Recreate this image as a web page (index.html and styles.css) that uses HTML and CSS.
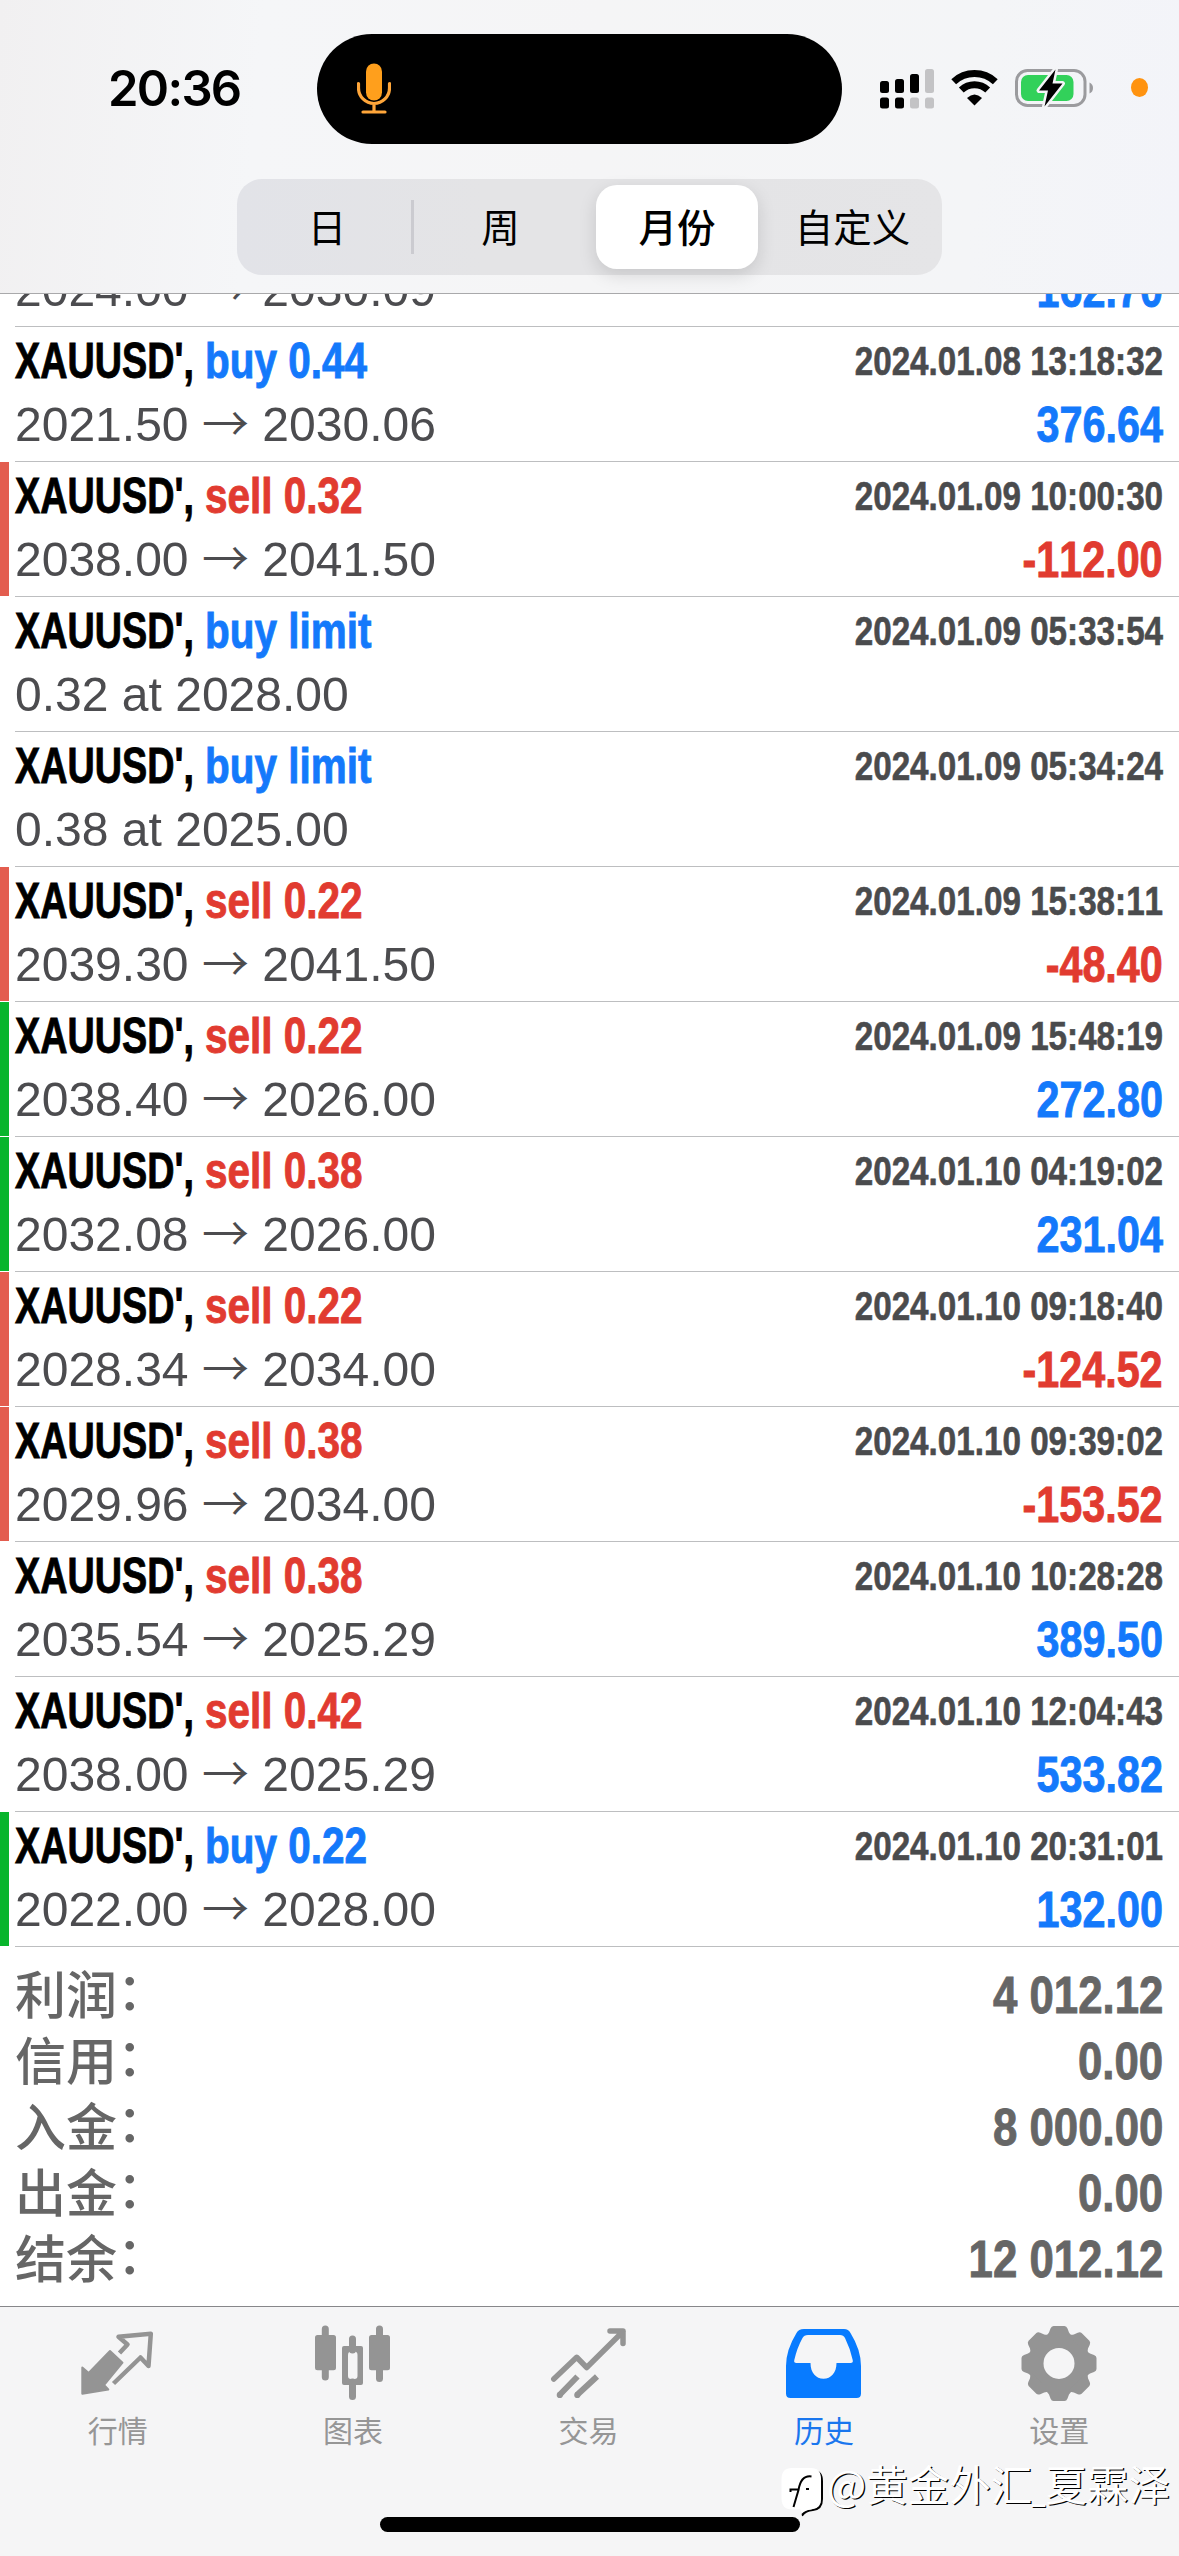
FILE: index.html
```
<!DOCTYPE html>
<html lang="zh-CN">
<head>
<meta charset="utf-8">
<title>历史</title>
<link rel="stylesheet" href="styles.css">
</head>
<body>
<div class="screen">
  <header class="header">
    <div class="status">
      <span class="clock">20:36</span>
      <div class="island">
        <svg class="mic" width="34" height="52" viewBox="0 0 34 52">
          <rect x="9" y="0.5" width="16" height="37" rx="8" fill="#ff9f1c"/>
          <path d="M1.5 20.500V25a15.500 15.500 0 0 0 31 0V20.500M17 40.500V48M6 49H28" fill="none" stroke="#ffa63a" stroke-width="3.200" stroke-linecap="round"/>
        </svg>
      </div>
      <svg class="signal" width="54" height="40" viewBox="0 0 54 40">
        <g fill="#000"><rect x="0" y="12" width="9" height="12" rx="2.500"/><rect x="15" y="10" width="9" height="14" rx="2.500"/><rect x="30" y="5" width="9" height="19" rx="2.500"/><rect x="0" y="28.500" width="9" height="11" rx="2.500"/><rect x="15" y="28.500" width="9" height="11" rx="2.500"/></g>
        <g fill="#c3c3c5"><rect x="45" y="0" width="9" height="24" rx="2.500"/><rect x="30" y="28.500" width="9" height="11" rx="2.500"/><rect x="45" y="28.500" width="9" height="11" rx="2.500"/></g>
      </svg>
      <svg class="wifi" width="47" height="36" viewBox="0 0 47 36">
        <path d="M2.700 11.800A30.500 30.500 0 0 1 44.300 11.800M10.300 20A19.300 19.300 0 0 1 36.700 20" fill="none" stroke="#000" stroke-width="7"/>
        <path d="M23.500 35.500L16 28Q23.500 21 31 28Z"/>
      </svg>
      <svg class="battery" width="78" height="38" viewBox="0 0 78 38">
        <rect x="1.500" y="1.500" width="68.500" height="35" rx="11" fill="none" stroke="#9b9b9e" stroke-width="3"/>
        <path d="M74.500 13.500Q78 15 78 19T74.500 24.500Z" fill="#9b9b9e"/>
        <rect x="6" y="6" width="52.500" height="26" rx="7" fill="#32d15a"/>
        <path d="M40.500 0.500L24 21.500H33L29.500 37.500L47.500 14.500H37.500Z" stroke="#f4f5f7" stroke-width="5" paint-order="stroke" stroke-linejoin="round"/>
      </svg>
      <span class="rec-dot"></span>
    </div>
    <nav class="segments">
      <span class="segment divided">日</span>
      <span class="segment">周</span>
      <span class="segment selected">月份</span>
      <span class="segment">自定义</span>
    </nav>
  </header>

  <main class="content">
    <ul class="deals">
      <li class="deal cut"><i class="mark"></i><div class="body"><div class="line"></div><div class="line"><span class="detail">2024.00 <b class="arrow">→</b> 2030.09</span><span class="amount blue">162.70</span></div></div></li>
      <li class="deal"><i class="mark"></i><div class="body"><div class="line"><span class="name">XAUUSD',</span><span class="action blue">buy 0.44</span><time class="date">2024.01.08 13:18:32</time></div><div class="line"><span class="detail">2021.50 <b class="arrow">→</b> 2030.06</span><span class="amount blue">376.64</span></div></div></li>
      <li class="deal"><i class="mark loss"></i><div class="body"><div class="line"><span class="name">XAUUSD',</span><span class="action red">sell 0.32</span><time class="date">2024.01.09 10:00:30</time></div><div class="line"><span class="detail">2038.00 <b class="arrow">→</b> 2041.50</span><span class="amount red">-112.00</span></div></div></li>
      <li class="deal"><i class="mark"></i><div class="body"><div class="line"><span class="name">XAUUSD',</span><span class="action blue">buy limit</span><time class="date">2024.01.09 05:33:54</time></div><div class="line"><span class="detail">0.32 at 2028.00</span></div></div></li>
      <li class="deal"><i class="mark"></i><div class="body"><div class="line"><span class="name">XAUUSD',</span><span class="action blue">buy limit</span><time class="date">2024.01.09 05:34:24</time></div><div class="line"><span class="detail">0.38 at 2025.00</span></div></div></li>
      <li class="deal"><i class="mark loss"></i><div class="body"><div class="line"><span class="name">XAUUSD',</span><span class="action red">sell 0.22</span><time class="date">2024.01.09 15:38:11</time></div><div class="line"><span class="detail">2039.30 <b class="arrow">→</b> 2041.50</span><span class="amount red">-48.40</span></div></div></li>
      <li class="deal"><i class="mark gain"></i><div class="body"><div class="line"><span class="name">XAUUSD',</span><span class="action red">sell 0.22</span><time class="date">2024.01.09 15:48:19</time></div><div class="line"><span class="detail">2038.40 <b class="arrow">→</b> 2026.00</span><span class="amount blue">272.80</span></div></div></li>
      <li class="deal"><i class="mark gain"></i><div class="body"><div class="line"><span class="name">XAUUSD',</span><span class="action red">sell 0.38</span><time class="date">2024.01.10 04:19:02</time></div><div class="line"><span class="detail">2032.08 <b class="arrow">→</b> 2026.00</span><span class="amount blue">231.04</span></div></div></li>
      <li class="deal"><i class="mark loss"></i><div class="body"><div class="line"><span class="name">XAUUSD',</span><span class="action red">sell 0.22</span><time class="date">2024.01.10 09:18:40</time></div><div class="line"><span class="detail">2028.34 <b class="arrow">→</b> 2034.00</span><span class="amount red">-124.52</span></div></div></li>
      <li class="deal"><i class="mark loss"></i><div class="body"><div class="line"><span class="name">XAUUSD',</span><span class="action red">sell 0.38</span><time class="date">2024.01.10 09:39:02</time></div><div class="line"><span class="detail">2029.96 <b class="arrow">→</b> 2034.00</span><span class="amount red">-153.52</span></div></div></li>
      <li class="deal"><i class="mark"></i><div class="body"><div class="line"><span class="name">XAUUSD',</span><span class="action red">sell 0.38</span><time class="date">2024.01.10 10:28:28</time></div><div class="line"><span class="detail">2035.54 <b class="arrow">→</b> 2025.29</span><span class="amount blue">389.50</span></div></div></li>
      <li class="deal"><i class="mark"></i><div class="body"><div class="line"><span class="name">XAUUSD',</span><span class="action red">sell 0.42</span><time class="date">2024.01.10 12:04:43</time></div><div class="line"><span class="detail">2038.00 <b class="arrow">→</b> 2025.29</span><span class="amount blue">533.82</span></div></div></li>
      <li class="deal"><i class="mark gain"></i><div class="body"><div class="line"><span class="name">XAUUSD',</span><span class="action blue">buy 0.22</span><time class="date">2024.01.10 20:31:01</time></div><div class="line"><span class="detail">2022.00 <b class="arrow">→</b> 2028.00</span><span class="amount blue">132.00</span></div></div></li>
    </ul>

    <dl class="summary">
      <div class="total"><dt>利润<span class="colon">：</span></dt><dd>4 012.12</dd></div>
      <div class="total"><dt>信用<span class="colon">：</span></dt><dd>0.00</dd></div>
      <div class="total"><dt>入金<span class="colon">：</span></dt><dd>8 000.00</dd></div>
      <div class="total"><dt>出金<span class="colon">：</span></dt><dd>0.00</dd></div>
      <div class="total"><dt>结余<span class="colon">：</span></dt><dd>12 012.12</dd></div>
    </dl>
  </main>

  <footer class="tabbar">
    <nav class="tabs">
      <a class="tab">
        <svg width="84" height="84" viewBox="76 30 84 84">
          <path d="M110 61L122.500 72.700L104 95L108.300 99.500L82.300 103.700V77.500L88.700 83Z" fill="#949494" stroke="#949494" stroke-width="2" stroke-linejoin="round"/>
          <path d="M119.500 63L127.500 54.500L118.500 46.700L150.800 43.800L148.500 76L140.500 67.500L113.500 93.500" fill="none" stroke="#949494" stroke-width="4.500" stroke-linejoin="round"/>
        </svg>
        行情
      </a>
      <a class="tab">
        <svg width="84" height="84" viewBox="311 30 84 84">
          <path d="M325.300 39V87M379.500 39V88.500M352.500 49V60M352.500 92V106.500" stroke="#949494" stroke-width="7" stroke-linecap="round"/>
          <rect x="315" y="45" width="21" height="35.300" rx="2.500" fill="#949494"/>
          <rect x="369" y="45" width="21" height="35.300" rx="2.500" fill="#949494"/>
          <path d="M344 56H361Q363 56 363 58V93Q363 95 361 95H344Q342 95 342 93V58Q342 56 344 56ZM351 61.500Q348 61.500 348 65V86Q348 89 351 89H354.500Q357.500 89 357.500 86V65Q357.500 61.500 354.500 61.500Z" fill="#949494" fill-rule="evenodd"/>
        </svg>
        图表
      </a>
      <a class="tab">
        <svg width="84" height="84" viewBox="547 30 84 84">
          <path d="M553.800 89L576.700 67.300L586.700 77.500L623 41.500M610 41H623V53.500" fill="none" stroke="#949494" stroke-width="5.500" stroke-linecap="round" stroke-linejoin="round"/>
          <path d="M559.500 105L577.500 86.500M577 105L597 86.500" stroke="#949494" stroke-width="6"/>
          <circle cx="559.800" cy="105" r="3.100" fill="#949494"/><circle cx="577.300" cy="105" r="3.100" fill="#949494"/>
        </svg>
        交易
      </a>
      <a class="tab active">
        <svg width="84" height="84" viewBox="782 30 84 84">
          <path d="M804 39H844Q848.500 39 850.500 43Q861 60 861 76V103.500Q861 108 856.500 108H790.500Q786 108 786 103.500V76Q786 60 796.500 43Q798.500 39 804 39ZM808 45Q804 45 802.500 48Q797 58 794.300 70Q793.500 73 796.500 73H810.500C810.500 83 816 88.700 823.500 88.700C831 88.700 836.500 83 836.500 73H850.500Q853.500 73 852.700 70Q850 58 845 48Q843.500 45 840 45Z" fill="#087bff" fill-rule="evenodd"/>
        </svg>
        历史
      </a>
      <a class="tab">
        <svg width="84" height="84" viewBox="-42 -43.400 84 84">
          <defs><path id="tooth" d="M-5.500 -37.500H5.500Q7.500 -37.500 8.500 -35L10 -31Q11 -28.500 15 -26.500H-15Q-11 -28.500 -10 -31L-8.500 -35Q-7.500 -37.500 -5.500 -37.500Z" fill="#949494"/></defs>
          <circle r="22.300" fill="none" stroke="#949494" stroke-width="13.600"/>
          <use href="#tooth"/><use href="#tooth" transform="rotate(45)"/><use href="#tooth" transform="rotate(90)"/><use href="#tooth" transform="rotate(135)"/><use href="#tooth" transform="rotate(180)"/><use href="#tooth" transform="rotate(225)"/><use href="#tooth" transform="rotate(270)"/><use href="#tooth" transform="rotate(315)"/>
        </svg>
        设置
      </a>
    </nav>
    <div class="home-indicator"></div>
  </footer>

  <div class="watermark">
    <svg width="44" height="50" viewBox="0 0 44 50">
      <path d="M12 2H32Q42 2 42 13V31Q42 42 32 43Q25 43.500 22 48Q20 49 21 43L32 41Q40 40 40 31V13Q40 4 32 2Z" fill="#000"/>
      <path d="M11 0H30Q40 0 40 11V30Q40 40.500 30 41.500Q24 42 20.500 46L19.500 41.500H11Q0.500 41.500 0.500 30V11Q0.500 0 11 0Z" fill="#fff"/>
      <path d="M30.500 8.500Q20 7 17.500 22L12.500 39M9.500 24V21.500H17M25 21H28" fill="none" stroke="#000" stroke-width="2"/>
    </svg>
    <span>@黄金外汇<span class="underscore">_</span>夏霖泽</span>
  </div>
</div>
</body>
</html>
```
FILE: styles.css
```
* { box-sizing: border-box; }

body {
  margin: 0;
  background: #fff;
  font-family: "Liberation Sans", "Noto Sans CJK SC", sans-serif;
}

.screen {
  position: relative;
  display: flex;
  flex-direction: column;
  width: 1179px;
  height: 2556px;
  overflow: hidden;
}

/* header */
.header {
  height: 294px;
  flex: none;
  border-bottom: 1px solid #a9a9ab;
  background: linear-gradient(95deg, #f1f0f1 0%, #f5f6f8 22%, #f5f5f6 50%, #f4f5f7 82%, #f3f4f9 100%);
}

.status {
  display: flex;
  align-items: center;
  height: 177px;
  margin-bottom: 2px;
  padding-left: 108px;
}

.clock {
  width: 209px;
  font: 600 49px/60px Inter, sans-serif;
  letter-spacing: -1.700px;
  white-space: nowrap;
}

.island {
  display: flex;
  align-items: center;
  width: 525px;
  height: 110px;
  padding-left: 40px;
  border-radius: 55px;
  background: #000;
}

.signal { margin-left: 38px; }
.wifi { margin-left: 17px; margin-top: -2px; }
.battery { margin-left: 17px; margin-top: -2px; overflow: visible; }

.rec-dot {
  width: 17px;
  height: 19px;
  margin: -2px 0 0 38px;
  border-radius: 50%;
  background: #ff9310;
}

.segments {
  display: flex;
  width: 705px;
  height: 96px;
  margin-left: 237px;
  padding: 6px 3px;
  border-radius: 25px;
  background: linear-gradient(90deg, #e2e3e8, #e4e4e6 35%, #e4e4e6 70%, #e5e5e7);
}

.segment {
  display: flex;
  flex: 1;
  align-items: center;
  justify-content: center;
  padding-bottom: 4px;
  font: 400 38.500px/1 "Noto Sans CJK SC", sans-serif;
}

.divided {
  flex: none;
  width: 174px;
  background: linear-gradient(#cbcbd0, #cbcbd0) right 15px / 3px 54px no-repeat;
}

.selected {
  flex: none;
  width: 162px;
  margin: 0 5px 0 9px;
  border-radius: 21px;
  background: #fff;
  box-shadow: 0 6px 18px rgba(0, 0, 0, .13);
  font-weight: 500;
}

.selected + .segment { padding-left: 3px; }

/* deals */
.content {
  flex: 1;
  overflow: hidden;
}

.deals, .summary { margin: 0; padding: 0; list-style: none; }

.deal {
  display: flex;
  height: 135px;
}

.cut { margin-top: -102px; }

.mark {
  width: 9px;
  margin: 0 6px 1px 0;
}

.loss { background: #e35d4f; }
.gain { background: #08b52c; }

.body {
  display: flex;
  flex: 1;
  flex-direction: column;
  gap: 3px;
  padding: 4px 16px 0 0;
  border-bottom: 1px solid #bdbec0;
}

.line {
  display: flex;
  height: 60px;
  line-height: 60px;
  white-space: nowrap;
}

.name, .action, .date, .amount, .total dd {
  font-size: 50px;
  font-weight: 700;
  transform-origin: 0 50%;
  -webkit-text-stroke: .9px currentColor;
}

.name {
  width: 190px;
  transform: scaleX(.755);
}

.action { transform: scaleX(.81); }

.date {
  margin-left: auto;
  color: #4a4b4d;
  font-size: 40.500px;
  font-kerning: none;
  transform: scaleX(.82);
  transform-origin: 100% 50%;
  -webkit-text-stroke-width: .6px;
}

.detail {
  color: #4c4c4f;
  font-size: 49px;
  transform: scaleX(.98);
  transform-origin: 0 50%;
}

.arrow {
  font: 350 48px/1 "Noto Sans CJK SC", sans-serif;
}

.amount {
  margin-left: auto;
  font-kerning: none;
  transform: translateY(1px) scaleX(.826);
  transform-origin: 100% 50%;
}

.blue { color: #1479fb; }
.red { color: #e13b30; }

/* totals */
.summary { padding: 15px 16px 0 15px; }

.total {
  display: flex;
  justify-content: space-between;
  height: 66px;
  line-height: 66px;
  color: #666;
}

.total dt {
  margin-top: -3px;
  font: 500 51px/66px "Noto Sans CJK SC", sans-serif;
}

.colon {
  display: inline-block;
  transform: translateY(-4px);
}

.total dd {
  margin: 0;
  font-size: 52px;
  font-kerning: none;
  transform: scaleX(.842);
  transform-origin: 100% 50%;
}

/* tab bar */
.tabbar {
  display: flex;
  flex: none;
  flex-direction: column;
  align-items: center;
  justify-content: space-between;
  height: 250px;
  padding: 13px 0 24px;
  border-top: 1px solid #87878a;
  background: #f5f5f6;
}

.tabs {
  display: flex;
  width: 100%;
  padding-right: 2px;
}

.tab {
  display: flex;
  flex: 1;
  flex-direction: column;
  align-items: center;
  gap: 3px;
  color: #969696;
  font: 400 30px/44px "Noto Sans CJK SC", sans-serif;
}

.active { color: #1a76ee; }

.home-indicator {
  width: 420px;
  height: 15px;
  border-radius: 8px;
  background: #000;
}

.watermark {
  position: absolute;
  left: 781px;
  top: 2468px;
  display: flex;
  gap: 2px;
  color: #fff;
  font: 400 41.500px/30px "Noto Sans CJK SC", sans-serif;
  text-shadow: 1.300px 1.300px 0 #000;
  white-space: nowrap;
}

.underscore {
  display: inline-block;
  margin: 0 -5px;
  transform: scaleX(.6);
}
```
